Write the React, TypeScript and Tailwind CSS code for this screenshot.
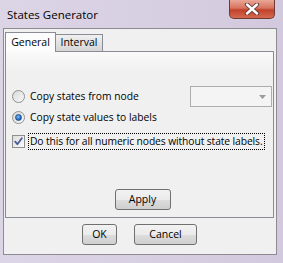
import React from 'react';

const FONT = { fontFamily: '"Open Sans", "Liberation Sans", sans-serif' };

function Radio({ checked }: { checked?: boolean }) {
  return (
    <span className="flex h-[13px] w-[13px] shrink-0 items-center justify-center rounded-full border border-[#8f9090] bg-gradient-to-br from-[#d8d8d8] to-[#fbfbfb]">
      {checked && (
        <span className="h-[7px] w-[7px] rounded-full border border-[#1b4f91] bg-[radial-gradient(circle_at_40%_35%,#7fc1f0,#2a6fc0_60%,#1b4f91)]" />
      )}
    </span>
  );
}

function Checkbox() {
  return (
    <span className="flex h-[13px] w-[13px] shrink-0 items-center justify-center border border-[#8f8f8f] bg-gradient-to-br from-[#dcdcdc] to-[#fbfbfb]">
      <svg width="9" height="9" viewBox="0 0 9 9">
        <path d="M1.2 4.6 L3.4 7.2 L7.8 1.2" fill="none" stroke="#4a5f97" strokeWidth="1.8" strokeLinecap="round" strokeLinejoin="round" />
      </svg>
    </span>
  );
}

function Button({ label, className }: { label: string; className: string }) {
  return (
    <button
      className={`flex h-[21px] items-center justify-center rounded-[3px] border border-[#707070] bg-[linear-gradient(#f2f2f2,#ebebeb_50%,#dddddd_51%,#cfcfcf)] text-[10.5px] text-black ${className}`}
    >
      {label}
    </button>
  );
}

export default function App() {
  return (
    <div
      className="flex h-[263px] w-[283px] flex-col bg-[linear-gradient(90deg,#dcd5e6,#d3c9de)] text-black"
      style={FONT}
    >
      {/* title bar */}
      <div className="flex h-[28px] shrink-0 items-start justify-between">
        <span className="pl-[7px] pt-[7px] text-[11.5px] leading-[15px]">States Generator</span>
        <span className="mr-[8px] flex h-[19px] w-[46px] items-center justify-center rounded-b-[5px] border border-t-0 border-[#6e3a33] bg-[linear-gradient(#e9a797,#d7725e_45%,#c2412b_55%,#d36a4f)]">
          <svg width="16" height="12" viewBox="0 0 16 12">
            <path d="M3 1.5 L13 10.5 M13 1.5 L3 10.5" stroke="#5a3a36" strokeWidth="4.2" strokeLinecap="round" />
            <path d="M3 1.5 L13 10.5 M13 1.5 L3 10.5" stroke="#ffffff" strokeWidth="2.4" strokeLinecap="round" />
          </svg>
        </span>
      </div>

      {/* client area */}
      <div className="ml-[3px] mr-[6px] flex h-[227px] flex-col border border-[#8d8a91] bg-[#f0f0f0] pl-[1px] pr-[2px] pt-[3px]">
        <div className="flex items-end">
          <div className="relative z-10 -mb-px flex h-[20px] w-[51px] items-center justify-center border border-b-0 border-[#898c95] bg-[#fcfcfc] text-[10.5px]">
            General
          </div>
          <div className="-ml-px flex h-[17px] w-[48px] items-center justify-center border border-b-0 border-[#898c95] bg-[linear-gradient(#f0f0f0,#e2e2e2_50%,#d6d6d6)] text-[10.5px]">
            Interval
          </div>
        </div>
        <div className="flex h-[167px] flex-col border border-[#898c95] bg-[linear-gradient(#fafafa,#f0f0f0_20px)] pl-[6px] pt-[34px] text-[10.3px]">
          <div className="flex h-[21px] items-center">
            <Radio />
            <span className="ml-[5px] whitespace-nowrap">Copy states from node</span>
            <div className="ml-auto mr-[1px] flex h-[21px] w-[82px] items-center justify-end border border-[#adadad] bg-[#f4f4f4] pr-[5px]">
              <svg width="7" height="4" viewBox="0 0 7 4">
                <path d="M0 0 H7 L3.5 4 Z" fill="#9a9a9a" />
              </svg>
            </div>
          </div>
          <div className="flex h-[21px] items-center">
            <Radio checked />
            <span className="ml-[5px] whitespace-nowrap">Copy state values to labels</span>
          </div>
          <div className="mt-[5px] flex h-[17px] items-center">
            <Checkbox />
            <span className="ml-[3px] flex h-[17px] items-center whitespace-nowrap border border-dotted border-black px-[1px] tracking-[-0.1px]">
              Do this for all numeric nodes without state labels.
            </span>
          </div>
          <div className="mt-[39px] flex justify-center">
            <Button label="Apply" className="w-[56px]" />
          </div>
        </div>
        <div className="mt-[6px] flex justify-center gap-[17px]">
          <Button label="OK" className="w-[35px]" />
          <Button label="Cancel" className="w-[63px]" />
        </div>
      </div>
    </div>
  );
}
